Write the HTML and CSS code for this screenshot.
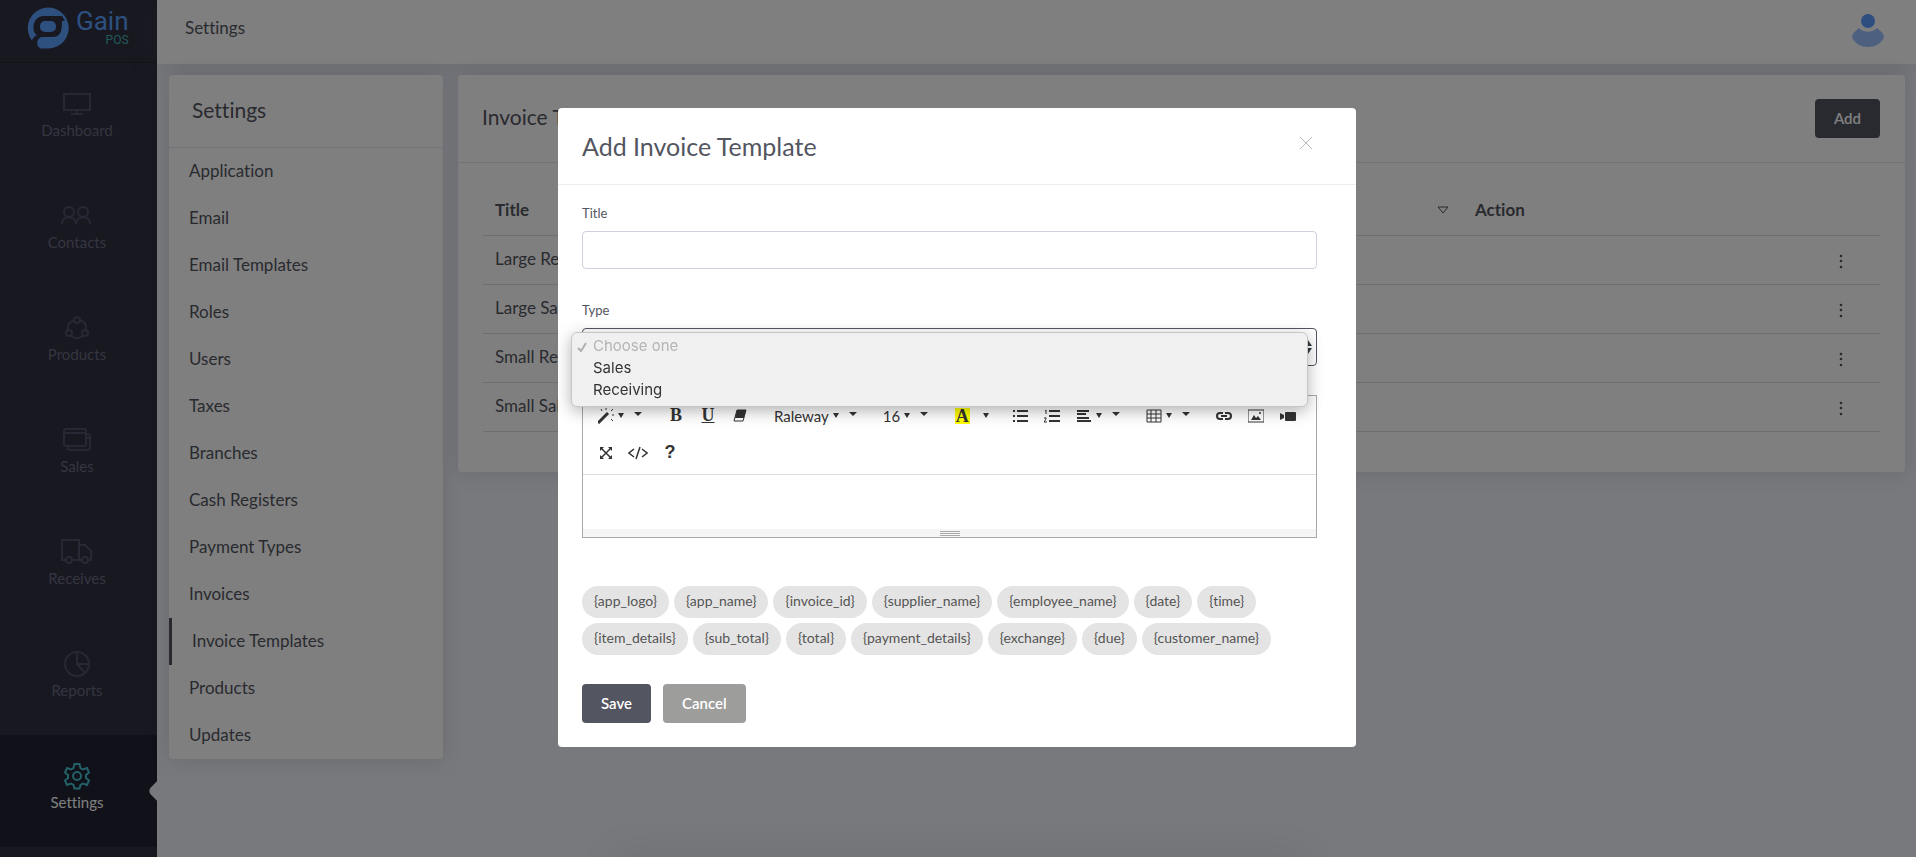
FILE: index.html
```html
<!DOCTYPE html>
<html lang="en">
<head>
    <meta charset="UTF-8">
    <meta name="viewport" content="width=device-width, initial-scale=1.0">
    <title>Gain POS - Settings</title>
    <link rel="stylesheet" href="styles.css">
</head>
<body>
    <nav class="sidebar">
        <a class="brand" href="#">
            <svg class="brand-logo" viewBox="0 0 42 42">
                <path fill="#5aa0ff" fill-rule="evenodd" d="M5 33.500A20.500 20.500 0 1 1 21 41.500H15C9 41.500 8.500 31 15 30H25C34 30 35 24 35 14H38L35 9H17C5 9 4 25 10 28C7 29.500 6 31 5 33.500Z"/>
                <rect x="13" y="14" width="16" height="11" rx="5" fill="#5aa0ff"/>
            </svg>
            <span class="brand-text">
                <span class="brand-name">Gain</span>
                <span class="brand-sub">POS</span>
            </span>
        </a>
        <a class="nav-item" href="#">
            <svg viewBox="0 0 32 32"><path d="M3 6h26v16H3zM16 22v4M10 26h12"/></svg>
            Dashboard
        </a>
        <a class="nav-item" href="#">
            <svg viewBox="0 0 32 32"><circle cx="8" cy="12" r="5"/><circle cx="22" cy="12" r="5"/><path d="M1 24c0-9 14-9 14 0c0-9 14-9 14 0"/></svg>
            Contacts
        </a>
        <a class="nav-item" href="#">
            <svg viewBox="0 0 32 32"><circle cx="16" cy="8" r="3"/><circle cx="8" cy="21" r="3"/><circle cx="24" cy="21" r="3"/><path d="M13 8C8 10 6 13 7 18M19 8c5 2 7 5 6 10M10 24c4 3 8 3 12 0"/></svg>
            Products
        </a>
        <a class="nav-item" href="#">
            <svg viewBox="0 0 32 32"><rect x="3" y="5" width="22" height="17" rx="2"/><path d="M3 9h22M7 22v2q0 2 2 2h18q2 0 2-2V12q0-2-3-2M25 14h4"/></svg>
            Sales
        </a>
        <a class="nav-item" href="#">
            <svg viewBox="0 0 32 32"><path d="M5 24H1V4h17v20H11M18 9h6l6 6v9h-3M18 24h3"/><circle cx="8" cy="24" r="3"/><circle cx="24" cy="24" r="3"/></svg>
            Receives
        </a>
        <a class="nav-item" href="#">
            <svg viewBox="0 0 32 32"><circle cx="16" cy="16" r="12"/><path d="M16 4v12h12M16 16l8 9"/></svg>
            Reports
        </a>
        <a class="nav-item active" href="#">
            <svg viewBox="0 0 32 32"><circle cx="16" cy="16" r="4"/><path d="M13.500 4h5l1 4 2.500 1.500 4-1.500 2 4.500-3 2.500v3l3 2.500-2 4.500-4-1.500-2.500 1.500-1 3.500h-5l-1-3.500-2.500-1.500-4 1.500-2-4.500 3-2.500v-3l-3-2.500 2-4.500 4 1.500 2.500-1.500z"/></svg>
            Settings
        </a>
    </nav>

    <div class="page">
        <header class="topbar">
            <span>Settings</span>
            <svg class="avatar" viewBox="0 0 32 34">
                <path fill="#9dc0ff" d="M7 14C3 17 0 20 0 23C3 30 9 33 16 33S29 30 32 23C32 20 29 17 25 14C20 19 12 19 7 14Z"/>
                <circle cx="16" cy="7" r="7" fill="#5a9cff"/>
            </svg>
        </header>
        <main class="content">
            <section class="card settings">
                <h2>Settings</h2>
                <ul>
                    <li><a href="#">Application</a></li>
                    <li><a href="#">Email</a></li>
                    <li><a href="#">Email Templates</a></li>
                    <li><a href="#">Roles</a></li>
                    <li><a href="#">Users</a></li>
                    <li><a href="#">Taxes</a></li>
                    <li><a href="#">Branches</a></li>
                    <li><a href="#">Cash Registers</a></li>
                    <li><a href="#">Payment Types</a></li>
                    <li><a href="#">Invoices</a></li>
                    <li><a class="current" href="#">Invoice Templates</a></li>
                    <li><a href="#">Products</a></li>
                    <li><a href="#">Updates</a></li>
                </ul>
            </section>
            <section class="card templates">
                <div class="card-header">
                    <h2>Invoice Templates</h2>
                    <button class="btn btn-dark" type="button">Add</button>
                </div>
                <table>
                    <thead>
                        <tr>
                            <th>Title</th>
                            <th class="sort"><svg viewBox="0 0 12 8"><path d="M1 1h10L6 7z"/></svg></th>
                            <th class="action">Action</th>
                        </tr>
                    </thead>
                    <tbody>
                        <tr>
                            <td colspan="2">Large Receiving</td>
                            <td class="more"><button type="button" aria-label="More"><svg viewBox="0 0 4 16"><circle cx="2" cy="3" r="1.300"/><circle cx="2" cy="8" r="1.300"/><circle cx="2" cy="14" r="1.300"/></svg></button></td>
                        </tr>
                        <tr>
                            <td colspan="2">Large Sales</td>
                            <td class="more"><button type="button" aria-label="More"><svg viewBox="0 0 4 16"><circle cx="2" cy="3" r="1.300"/><circle cx="2" cy="8" r="1.300"/><circle cx="2" cy="14" r="1.300"/></svg></button></td>
                        </tr>
                        <tr>
                            <td colspan="2">Small Receiving</td>
                            <td class="more"><button type="button" aria-label="More"><svg viewBox="0 0 4 16"><circle cx="2" cy="3" r="1.300"/><circle cx="2" cy="8" r="1.300"/><circle cx="2" cy="14" r="1.300"/></svg></button></td>
                        </tr>
                        <tr>
                            <td colspan="2">Small Sales</td>
                            <td class="more"><button type="button" aria-label="More"><svg viewBox="0 0 4 16"><circle cx="2" cy="3" r="1.300"/><circle cx="2" cy="8" r="1.300"/><circle cx="2" cy="14" r="1.300"/></svg></button></td>
                        </tr>
                    </tbody>
                </table>
            </section>
        </main>
    </div>

    <div class="overlay">
        <div class="modal" role="dialog" aria-labelledby="modal-title">
            <div class="modal-header">
                <h1 id="modal-title">Add Invoice Template</h1>
                <button class="close" type="button" aria-label="Close">
                    <svg viewBox="0 0 14 14"><path d="M1 1l12 12M13 1L1 13"/></svg>
                </button>
            </div>
            <form class="modal-body">
                <label for="title">Title</label>
                <input type="text" id="title">

                <label for="type">Type</label>
                <div class="select-wrap">
                    <select id="type">
                        <option>Choose one</option>
                        <option>Sales</option>
                        <option>Receiving</option>
                    </select>
                    <svg class="select-arrows" viewBox="0 0 10 14"><path d="M5 0l4 6H1zM5 14l4-6H1z"/></svg>
                    <ul class="options">
                        <li class="chosen"><svg viewBox="0 0 10 10"><path d="M1 6l3 3 5-8"/></svg>Choose one</li>
                        <li>Sales</li>
                        <li>Receiving</li>
                    </ul>
                </div>

                <div class="editor">
                    <div class="toolbar">
                        <div class="group">
                            <button type="button" class="drop" aria-label="Style">
                                <svg viewBox="0 0 16 16"><path class="line thick" d="M0 15l10-10"/><path class="line" d="M8 0v2M3 1l1 2M15 1l-2 2M14 7h3M13 11l2 2"/></svg>
                                <i class="caret"></i>
                            </button>
                        </div>
                        <div class="group">
                            <button type="button" class="serif">B</button>
                            <button type="button" class="serif underline">U</button>
                            <button type="button" aria-label="Clear">
                                <svg viewBox="0 0 16 16"><path d="M5 2h9l-2 8H3z"/><path class="line" d="M5 2h9l-3 11H2z"/></svg>
                            </button>
                        </div>
                        <div class="group">
                            <button type="button" class="drop">Raleway<i class="caret"></i></button>
                        </div>
                        <div class="group">
                            <button type="button" class="drop">16<i class="caret"></i></button>
                        </div>
                        <div class="group">
                            <button type="button" class="serif"><mark>A</mark></button>
                            <button type="button" class="color-drop" aria-label="More colors"><i class="caret"></i></button>
                        </div>
                        <div class="group">
                            <button type="button" aria-label="Bullets">
                                <svg viewBox="0 0 16 16"><path class="line thin" d="M1 3h2M1 8h2M1 13h2M5 3h11M5 8h11M5 13h11"/></svg>
                            </button>
                            <button type="button" aria-label="Numbers">
                                <svg viewBox="0 0 16 16"><path class="line thin" d="M5 3h11M5 8h11M5 13h11"/><path class="line fine" d="M1 3l1-1v4M0 10q3-1 2 1l-2 3h3"/></svg>
                            </button>
                            <button type="button" class="drop" aria-label="Paragraph">
                                <svg viewBox="0 0 16 16"><path class="line thin" d="M1 3h12M1 6h9M1 10h12M1 13h14"/></svg>
                                <i class="caret"></i>
                            </button>
                        </div>
                        <div class="group">
                            <button type="button" class="drop" aria-label="Table">
                                <svg viewBox="0 0 16 16"><path class="line fine" d="M1 2h14v12H1zM1 6h14M1 10h14M5 2v12M10 2v12"/></svg>
                                <i class="caret"></i>
                            </button>
                        </div>
                        <div class="group">
                            <button type="button" aria-label="Link">
                                <svg viewBox="0 0 16 16"><path class="line thin" d="M7 5H4a3 3 0 0 0 0 6h3M9 5h3a3 3 0 0 1 0 6H9M5 8h6"/></svg>
                            </button>
                            <button type="button" aria-label="Picture">
                                <svg viewBox="0 0 16 16"><path class="line fine" d="M0 2h16v12H0z"/><path d="M3 12l3-5 2 3 2-2 3 4z"/><circle cx="12" cy="5" r="1"/></svg>
                            </button>
                            <button type="button" aria-label="Video">
                                <svg viewBox="0 0 16 16"><rect x="5" y="4" width="11" height="9" rx="1"/><path d="M0 5l4 2v3l-4 2z"/></svg>
                            </button>
                        </div>
                        <div class="group">
                            <button type="button" aria-label="Full Screen">
                                <svg viewBox="0 0 16 16"><path class="line medium" d="M3 3l10 10M13 3L3 13"/><path d="M2 2h4L2 6zM14 2h-4l4 4zM2 14h4l-4-4zM14 14h-4l4-4z"/></svg>
                            </button>
                            <button type="button" aria-label="Code View">
                                <svg class="wide" viewBox="0 0 20 16"><path class="line medium" d="M6 4L1 8l5 4M14 4l5 4-5 4M12 2L8 14"/></svg>
                            </button>
                            <button type="button" class="help">?</button>
                        </div>
                    </div>
                    <div class="editable" contenteditable="true"></div>
                    <div class="resizer"><i></i></div>
                </div>

                <div class="chips">
                    <span>{app_logo}</span>
                    <span>{app_name}</span>
                    <span>{invoice_id}</span>
                    <span>{supplier_name}</span>
                    <span>{employee_name}</span>
                    <span>{date}</span>
                    <span>{time}</span>
                    <span>{item_details}</span>
                    <span>{sub_total}</span>
                    <span>{total}</span>
                    <span>{payment_details}</span>
                    <span>{exchange}</span>
                    <span>{due}</span>
                    <span>{customer_name}</span>
                </div>

                <div class="buttons">
                    <button class="btn btn-dark" type="submit">Save</button>
                    <button class="btn btn-grey" type="button">Cancel</button>
                </div>
            </form>
        </div>
    </div>
</body>
</html>
```
FILE: styles.css
```css
* {
    box-sizing: border-box;
}
body {
    margin: 0;
    min-height: 100vh;
    display: flex;
    background: #f0f2f9;
    color: #535560;
    font-family: Lato, sans-serif;
    font-size: 17px;
    font-variant-ligatures: none;
    line-height: 24px;
}
a {
    color: inherit;
    text-decoration: none;
}
ul {
    list-style: none;
    margin: 0;
    padding: 0;
}
h1, h2 {
    margin: 0;
    font-weight: 400;
}
button, input, select {
    font-family: inherit;
    font-size: inherit;
    color: inherit;
}
svg {
    flex: none;
}

/* sidebar */
.sidebar {
    width: 157px;
    flex: none;
    background: #303040;
    color: #6a6a82;
}
.brand {
    height: 63px;
    display: flex;
    align-items: flex-start;
    gap: 7px;
    padding: 7px 0 0 27px;
    border-bottom: 1px solid #22222e;
}
.brand-logo {
    width: 42px;
    height: 42px;
}
.brand-text {
    display: flex;
    flex-direction: column;
    font-family: Roboto, sans-serif;
}
.brand-name {
    color: #5aa0ff;
    font-size: 26px;
    line-height: 28px;
}
.brand-sub {
    color: #45b0b4;
    font-size: 12px;
    line-height: 10px;
    text-align: right;
}
.nav-item {
    height: 112px;
    display: flex;
    flex-direction: column;
    align-items: center;
    padding: 25px 3px 0 0;
    font-size: 15px;
    line-height: 20px;
}
.nav-item svg {
    width: 32px;
    height: 32px;
    fill: none;
    stroke: #505068;
    stroke-width: 2;
}
.nav-item.active {
    position: relative;
    background: #222234;
    color: #fff;
}
.nav-item.active svg {
    stroke: #43c3cf;
}
.nav-item.active::after {
    content: "";
    position: absolute;
    right: -12px;
    top: 47px;
    width: 18px;
    height: 18px;
    border-radius: 5px;
    background: #f0f2f9;
    transform: rotate(45deg);
}

/* page */
.page {
    flex: 1;
    min-width: 0;
    position: relative;
}
.topbar {
    height: 64px;
    display: flex;
    align-items: center;
    justify-content: space-between;
    padding: 0 32px 8px 28px;
    background: #fff;
    box-shadow: 0 0 30px rgba(80, 80, 110, 0.2);
}
.avatar {
    width: 32px;
    height: 34px;
    margin-top: 6px;
}
.content {
    display: flex;
    align-items: flex-start;
    gap: 15px;
    padding: 11px 11px 0 12px;
}
.card {
    background: #fff;
    border-radius: 4px;
    box-shadow: 0 0 20px rgba(80, 80, 110, 0.18);
}
.card h2 {
    font-size: 21px;
}
.settings {
    width: 274px;
    flex: none;
}
.settings h2 {
    height: 73px;
    padding: 23px;
    border-bottom: 1px solid #e4e6ee;
}
.settings a {
    display: block;
    height: 47px;
    padding: 11px 20px;
}
.settings .current {
    border-left: 3px solid #535560;
}
.templates {
    flex: 1;
    padding-bottom: 40px;
}
.card-header {
    height: 88px;
    display: flex;
    align-items: flex-start;
    justify-content: space-between;
    padding: 24px 25px 0 24px;
    border-bottom: 1px solid #e4e6ee;
}
.card-header h2 {
    line-height: 36px;
}
.btn {
    height: 39px;
    border: none;
    border-radius: 4px;
    padding: 0 19px 2px;
    color: #fff;
    font-size: 15px;
    font-weight: 600;
}
.btn-dark {
    background: #535560;
}
.btn-grey {
    background: #9d9d9b;
}
table {
    width: calc(100% - 50px);
    margin: 23px 25px 0;
    border-collapse: collapse;
    table-layout: fixed;
}
th, td {
    height: 49px;
    padding: 0 12px 2px;
    border-bottom: 1px solid #dcdee6;
    text-align: left;
}
th {
    padding-bottom: 0;
}
th.sort {
    width: 40px;
    padding: 0 14px;
}
.sort svg {
    display: block;
    width: 12px;
    height: 8px;
    fill: none;
    stroke: #535560;
}
.action {
    width: 417px;
}
td.more {
    padding: 2px 37px 0;
}
.more button {
    display: block;
    margin-left: auto;
    padding: 0;
    border: none;
    background: none;
}
.more svg {
    display: block;
    width: 4px;
    height: 16px;
    fill: #535560;
}

/* modal */
.overlay {
    position: fixed;
    inset: 0;
    display: flex;
    justify-content: center;
    align-items: flex-start;
    padding: 108px 2px 0 0;
    background: rgba(0, 0, 0, 0.5);
}
.overlay::after {
    content: "";
    position: absolute;
    bottom: -20px;
    left: 32%;
    right: 32%;
    height: 20px;
    box-shadow: 0 0 40px rgba(0, 0, 0, 0.1);
}
.modal {
    width: 798px;
    background: #fff;
    border-radius: 4px;
}
.modal-header {
    height: 77px;
    display: flex;
    align-items: flex-start;
    justify-content: space-between;
    padding: 28px 43px 0 24px;
    border-bottom: 1px solid #ebedf2;
}
.modal-header h1 {
    font-size: 25px;
    line-height: 20px;
}
.close {
    display: flex;
    border: none;
    padding: 0;
    background: none;
}
.close svg {
    width: 14px;
    height: 14px;
    fill: none;
    stroke: #bbb;
}
.modal-body {
    padding: 18px 39px 24px 24px;
}
.modal-body label {
    display: block;
    margin-bottom: 8px;
    font-size: 13px;
    line-height: 20px;
}
.modal-body input, .modal-body select {
    display: block;
    width: 100%;
    height: 38px;
    border: 1px solid #ced2dc;
    border-radius: 4px;
    background: #fff;
}
.modal-body input {
    margin-bottom: 31px;
}
.select-wrap {
    position: relative;
    margin-bottom: 29px;
}
.modal-body select {
    appearance: none;
    border-color: #535560;
    padding: 0 12px;
}
.select-arrows {
    position: absolute;
    top: 12px;
    right: 4px;
    width: 10px;
    height: 14px;
    fill: #343a40;
}
.options {
    position: absolute;
    z-index: 1;
    top: 4px;
    left: -11px;
    right: 9px;
    padding: 2px 0 5px;
    border: 1px solid #c6c6c6;
    border-radius: 6px;
    background: #f0f0f0;
    box-shadow: 0 4px 16px rgba(0, 0, 0, 0.3);
    color: #333;
    font-family: Inter, sans-serif;
    font-size: 15px;
    line-height: 22px;
}
.options li {
    position: relative;
    padding-left: 21px;
}
.options .chosen {
    color: #b5b5b5;
}
.options svg {
    position: absolute;
    top: 7px;
    left: 5px;
    width: 10px;
    height: 10px;
    fill: none;
    stroke: #b0b0b0;
    stroke-width: 2;
}

/* editor */
.editor {
    border: 1px solid #a9a9a9;
}
.toolbar {
    display: flex;
    flex-wrap: wrap;
    column-gap: 10px;
    padding: 1px 0 3px 7px;
    border-bottom: 1px solid #ddd;
}
.group {
    display: flex;
}
.toolbar button {
    display: flex;
    align-items: center;
    justify-content: center;
    width: 32px;
    height: 37px;
    padding: 0;
    border: none;
    background: none;
    color: #333;
    font-size: 15px;
}
.toolbar svg {
    width: 16px;
    height: 16px;
    fill: #333;
}
.toolbar svg.wide {
    width: 20px;
}
.toolbar .line {
    fill: none;
    stroke: #333;
}
.toolbar .thick {
    stroke-width: 3;
}
.toolbar .thin {
    stroke-width: 2;
}
.toolbar .medium {
    stroke-width: 1.5;
}
.toolbar .drop {
    width: auto;
    padding: 0 8px;
    gap: 4px;
}
.caret {
    border: 3px solid transparent;
    border-top: 5px solid #333;
    border-bottom: none;
}
.drop::after {
    content: "";
    margin: 0 0 3px 6px;
    border: 4px solid transparent;
    border-top-color: #333;
    border-bottom: none;
}
.toolbar .serif {
    font-family: "Liberation Serif", serif;
    font-size: 18px;
    font-weight: 700;
}
.underline {
    text-decoration: underline;
}
mark {
    padding: 0 1px;
    background: #ff0;
    color: inherit;
    line-height: 16px;
}
.toolbar .color-drop {
    width: 16px;
}
.toolbar .help {
    font-family: "Liberation Sans", sans-serif;
    font-size: 18px;
    font-weight: 700;
}
.editable {
    height: 54px;
}
.resizer {
    height: 8px;
    padding-top: 2px;
    background: #f5f5f5;
}
.resizer i {
    display: block;
    width: 20px;
    height: 5px;
    margin: 0 auto;
    border: 1px solid #a9a9a9;
    border-width: 1px 0;
    background: linear-gradient(#f5f5f5 1px, #a9a9a9 1px, #a9a9a9 2px, #f5f5f5 2px);
}

.chips {
    display: flex;
    flex-wrap: wrap;
    gap: 5px;
    margin-top: 48px;
}
.chips span {
    height: 32px;
    padding: 0 12px;
    border-radius: 16px;
    background: #e4e4e4;
    color: #555;
    font-size: 14px;
    line-height: 30px;
}
.buttons {
    display: flex;
    gap: 12px;
    margin-top: 29px;
}
```
